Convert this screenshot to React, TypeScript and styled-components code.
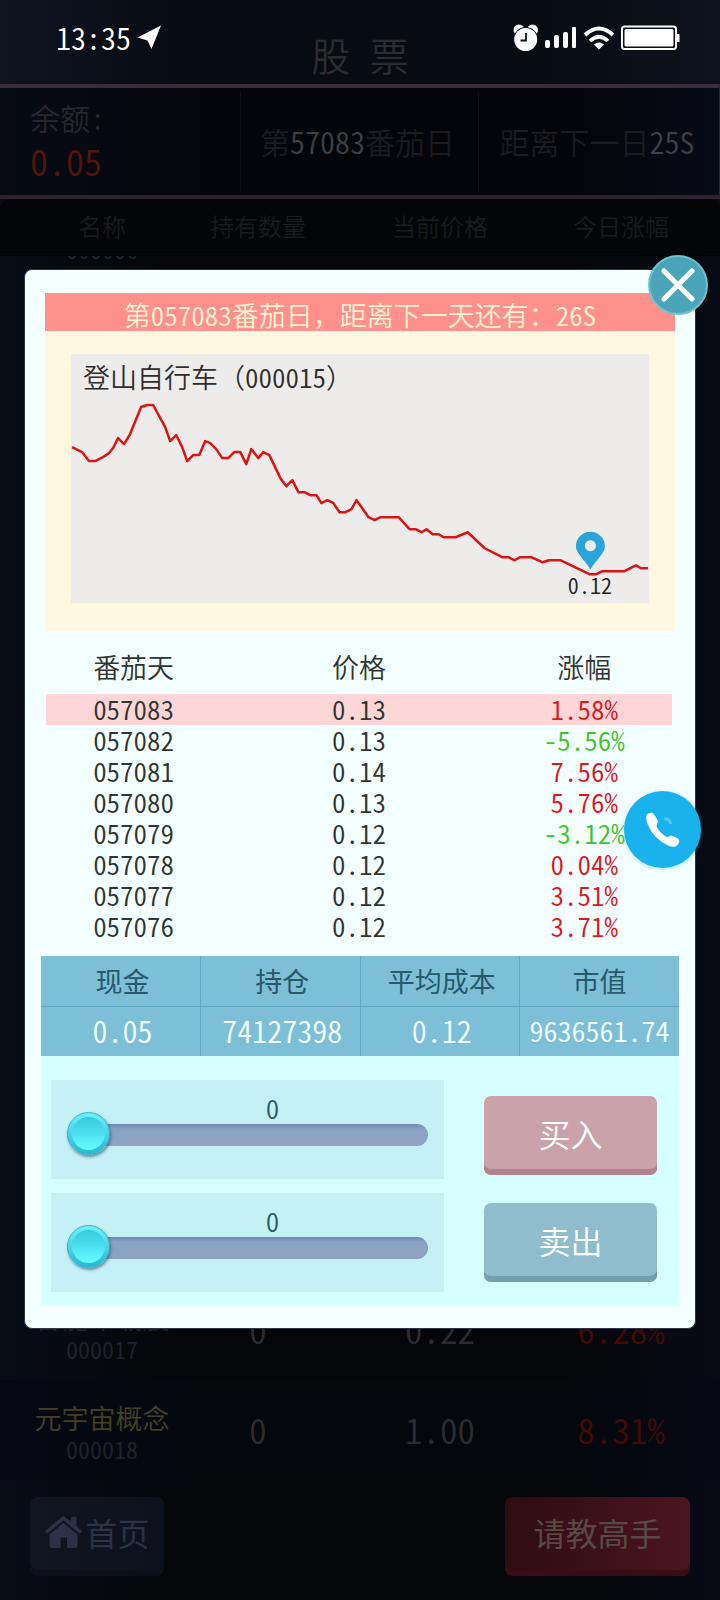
import React, { useState } from 'react';
import styled, { createGlobalStyle } from 'styled-components';

const GlobalStyle = createGlobalStyle`
  *, *::before, *::after { box-sizing: border-box; }
  body {
    margin: 0;
    background: #04060a;
    font-family: "Noto Sans CJK SC", sans-serif;
    font-weight: 350;
    font-feature-settings: "hwid";
  }
  button { font: inherit; font-feature-settings: inherit; border: 0; padding: 0; cursor: pointer; }
  table { border-collapse: collapse; border-spacing: 0; }
  th { font-weight: 350; }
`;

const Page = styled.div`
  position: relative;
  display: flex;
  flex-direction: column;
  min-height: 100vh;
  overflow: hidden;
  background: linear-gradient(90deg, #080c15 0%, #040609 25%, #040609 78%, #080b14 100%);
`;

/* ---------- header ---------- */
const Header = styled.header`
  display: grid;
  grid-template-columns: 1fr auto 1fr;
  align-items: start;
  height: 84px;
  padding: 0 40px 0 56px;
  background: linear-gradient(90deg, #10141f 0%, #070b12 25%, #070b12 75%, #0e121c 100%);
  color: #ffffff;
`;

const Clock = styled.div`
  display: flex;
  align-items: center;
  gap: 6px;
  height: 34px;
  margin-top: 20px;
  font-size: 30px;
  line-height: 34px;
`;

const StatusIcons = styled.div`
  display: flex;
  align-items: center;
  justify-content: flex-end;
  gap: 6px;
  height: 28px;
  margin-top: 24px;
`;

const Title = styled.h1`
  margin: 30px 0 0;
  padding-right: 16px;
  font-size: 39px;
  line-height: 48px;
  font-weight: 350;
  color: #2b2c31;
`;

/* ---------- balance strip ---------- */
const Strip = styled.section`
  display: grid;
  grid-template-columns: 241px 238px 1fr;
  height: 115px;
  padding: 4px 0;
  border-top: 4px solid #3a2d3a;
  border-bottom: 4px solid #2d242d;
  border-right: 1px solid #2d242d;
  background: linear-gradient(90deg, #070b14 0%, #04050a 30%, #04050a 80%, #070b16 100%);
`;

const StripCell = styled.div`
  display: flex;
  flex-direction: column;
  justify-content: center;
  align-items: center;
  padding-right: 4px;
  border-right: 1px solid #101117;
  font-size: 30px;
  line-height: 43px;
  color: #1b1b21;
  &:last-child { border-right: 0; }
`;

const BalanceCell = styled(StripCell)`
  align-items: flex-start;
  padding: 0 0 6px 30px;
  color: #26262c;
`;

const Balance = styled.span`
  font-size: 36px;
  color: #54130f;
`;

const Bright = styled.span`
  color: #3e3e43;
`;

/* ---------- stock list ---------- */
const ListHead = styled.div`
  display: grid;
  grid-template-columns: 204px 108px 256px 1fr;
  justify-items: center;
  height: 57px;
  padding-right: 46px;
  border-bottom: 1px solid #000000;
  border-radius: 10px 10px 0 0;
  background: #040507;
  font-size: 24px;
  line-height: 54px;
  color: #1a1b1f;
  white-space: nowrap;
`;

const List = styled.div`
  flex: 1;
  display: flex;
  flex-direction: column;
  justify-content: space-between;
`;

const ClippedTop = styled.div`
  display: flex;
  flex-direction: column;
  justify-content: flex-end;
  align-items: center;
  width: 204px;
  height: 8px;
  overflow: hidden;
`;

const StockRow = styled.div<{ $alt?: boolean }>`
  display: grid;
  grid-template-columns: 204px 108px 256px 1fr;
  justify-items: center;
  align-items: center;
  height: 100px;
  padding: 0 46px 4px 0;
  background: ${(p) => (p.$alt ? 'linear-gradient(90deg, #060913 0%, #04070c 30%, #04070c 80%, #070a14 100%)' : 'transparent')};
  font-size: 35px;
  color: #2b2c30;
`;

const StockName = styled.div<{ $held?: boolean }>`
  display: flex;
  flex-direction: column;
  align-items: center;
  padding-top: 9px;
  font-size: 27px;
  line-height: 32px;
  color: ${(p) => (p.$held ? '#453f25' : '#222327')};
`;

const StockCode = styled.span`
  font-size: 24px;
  line-height: 30px;
  color: #202329;
`;

const Rise = styled.span`
  color: #430808;
`;

const Footer = styled.footer`
  display: flex;
  justify-content: space-between;
  padding: 17px 30px 24px;
`;

const FooterButton = styled.button<{ $primary?: boolean }>`
  display: flex;
  align-items: center;
  justify-content: center;
  gap: 2px;
  width: ${(p) => (p.$primary ? '185px' : '134px')};
  height: 79px;
  padding-bottom: 9px;
  border-radius: 8px;
  box-shadow: inset 0 -6px 0 ${(p) => (p.$primary ? '#380d15' : '#0c101a')};
  background: ${(p) =>
    p.$primary
      ? 'linear-gradient(90deg, #2f0c12, #4a1520)'
      : 'linear-gradient(90deg, #101520, #0d111d)'};
  color: ${(p) => (p.$primary ? '#594845' : '#2a3243')};
  font-size: 32px;
  font-weight: 400;
`;

/* ---------- dialog ---------- */
const Dialog = styled.section`
  position: absolute;
  top: 269px;
  left: 24px;
  right: 24px;
  padding: 23px 16px 23px;
  border: 1px solid #2b3340;
  border-radius: 8px;
  background: #f4ffff;
`;

const CloseButton = styled.button`
  position: absolute;
  top: -15px;
  right: -13px;
  width: 60px;
  height: 60px;
  border-radius: 50%;
  border: 2px solid #6fc3d0;
  background: #4ba5b9;
  display: grid;
  place-items: center;
`;

const ChartCard = styled.div`
  margin: 0 4px;
  padding-bottom: 28px;
  background: #fff7e0;
`;

/* full-width punctuation beside half-width figures */
const Banner = styled.div`
  height: 38px;
  background: #ff908c;
  color: #fff3d2;
  font-size: 27px;
  line-height: 43px;
  text-align: center;
  white-space: nowrap;
  font-feature-settings: normal;
`;

const Figures = styled.span`
  font-feature-settings: "hwid";
`;

const Chart = styled.figure`
  margin: 23px 26px 0;
  background: #eeecea;
`;

const ChartTitle = styled.figcaption`
  height: 46px;
  padding-left: 12px;
  font-size: 27px;
  line-height: 46px;
  color: #2e2e2e;
  font-feature-settings: normal;
`;

const ChartPlot = styled.svg`
  display: block;
  width: 100%;
  height: auto;
`;

const History = styled.table`
  width: calc(100% - 12px);
  margin: 15px 7px 14px 5px;
  table-layout: fixed;
  text-align: center;
  font-size: 27px;
  line-height: 31px;
  color: #303433;
  th { height: 48px; padding: 0 0 7px; }
  td { padding: 0 0 2px; height: 31px; line-height: 29px; }
`;

const DayRow = styled.tr<{ $current?: boolean }>`
  background: ${(p) => (p.$current ? '#ffd6d7' : 'transparent')};
`;

const Change = styled.td<{ $down?: boolean }>`
  color: ${(p) => (p.$down ? '#40c32c' : '#e0161c')};
`;

const Summary = styled.table`
  width: 100%;
  table-layout: fixed;
  text-align: center;
  background: #7cbfd7;
  th, td {
    padding: 0 0 0 4px;
    height: 50px;
    border-right: 1px solid #60a7c1;
    white-space: nowrap;
  }
  th:last-child, td:last-child { border-right: 0; padding-left: 0; }
  th {
    border-bottom: 1px solid #60a7c1;
    font-size: 27px;
    line-height: 40px;
    color: #27596a;
    font-weight: 400;
  }
  td { padding-bottom: 4px; font-size: 30px; line-height: 40px; color: #f4ffff; }
  td:last-child { font-size: 28px; }
`;

const Trade = styled.div`
  display: grid;
  grid-template-columns: 1fr 173px;
  column-gap: 40px;
  padding: 24px 22px 13px 10px;
  background: #d6ffff;
`;

const SliderStack = styled.div`
  display: flex;
  flex-direction: column;
  gap: 14px;
`;

const ButtonStack = styled.div`
  display: flex;
  flex-direction: column;
  gap: 28px;
  padding-top: 16px;
`;

const SliderBox = styled.label`
  display: flex;
  flex-direction: column;
  height: 99px;
  padding: 14px 16px 0;
  background: #c5f0f5;
`;

const Amount = styled.output`
  height: 19px;
  padding-left: 50px;
  text-align: center;
  font-size: 27px;
  line-height: 28px;
  color: #2f5f69;
`;

const Range = styled.input`
  appearance: none;
  width: 100%;
  height: 44px;
  margin: 0;
  background: transparent;
  &::-webkit-slider-runnable-track {
    height: 22px;
    border-radius: 11px;
    background: linear-gradient(#6d8ab0 0, #8aa2c1 5px, #8da3c1 100%);
  }
  &::-webkit-slider-thumb {
    appearance: none;
    width: 43px;
    height: 43px;
    margin-top: -12px;
    border-radius: 50%;
    border: 1px solid #39b4c4;
    background:
      linear-gradient(#35c8e0, #66fbff) content-box,
      linear-gradient(#6ef3fa, #22b7d2) border-box;
    padding: 4px;
    box-shadow: 1px 2px 3px rgba(40, 70, 100, 0.6);
  }
`;

const TradeButton = styled.button<{ $sell?: boolean }>`
  width: 173px;
  height: 79px;
  padding-bottom: 6px;
  border-radius: 7px;
  background: ${(p) => (p.$sell ? '#8fbdce' : '#cba2a9')};
  box-shadow: inset 0 -6px 0 ${(p) => (p.$sell ? '#779db0' : '#b2838c')};
  color: #ffffff;
  font-size: 32px;
`;

const CallButton = styled.button`
  position: absolute;
  top: 791px;
  right: 19px;
  width: 77px;
  height: 77px;
  border-radius: 50%;
  background: #1ab2ec;
  box-shadow: 0 1px 4px rgba(26, 178, 236, 0.3);
`;

const HISTORY = [
  ['057083', '0.13', '1.58%'],
  ['057082', '0.13', '-5.56%'],
  ['057081', '0.14', '7.56%'],
  ['057080', '0.13', '5.76%'],
  ['057079', '0.12', '-3.12%'],
  ['057078', '0.12', '0.04%'],
  ['057077', '0.12', '3.51%'],
  ['057076', '0.12', '3.71%'],
];

const PRICE_LINE =
  '1,47 11,52 18,61 24,61 32,57 38,53 42,48 47,38 53,44 59,34 70,7 76,5 82,5 94,27 99,41 105,35 111,47 116,61 122,55 128,55 134,41 139,43 145,49 151,58 157,58 163,52 169,52 175,64 180,49 187,58 192,52 198,55 209,78 215,86 221,80 227,92 233,92 239,95 245,95 250,103 256,100 262,103 268,112 274,112 280,109 285,100 297,117 303,120 309,117 327,117 338,129 344,129 350,132 355,129 361,134 367,134 372,137 384,137 396,132 413,148 431,157 437,157 443,160 448,157 460,157 471,162 477,160 489,160 518,174 524,174 530,171 552,171 564,165 569,168 576,168';

function LocationArrow() {
  return (
    <svg width="25" height="25" viewBox="0 0 25 25" aria-hidden="true">
      <path d="M24 0.500 L14.500 24 L10.500 15.500 L0.500 12.500 Z" fill="#fff" />
    </svg>
  );
}

function AlarmIcon() {
  return (
    <svg width="26" height="28" viewBox="0 0 26 28" aria-hidden="true">
      <circle cx="6" cy="6" r="5.500" fill="#fff" />
      <circle cx="19.500" cy="6" r="5.500" fill="#fff" />
      <circle cx="12.700" cy="15.500" r="12.500" fill="#0b0f18" />
      <circle cx="12.700" cy="15.500" r="11.500" fill="#fff" />
      <path d="M13 9 V16.500 H7.500" fill="none" stroke="#0b0f18" strokeWidth="1.800" />
    </svg>
  );
}

function SignalIcon() {
  return (
    <svg width="32" height="24" viewBox="0 0 32 24" aria-hidden="true">
      <rect x="0" y="14" width="5" height="8" rx="2" fill="#fff" />
      <rect x="9" y="9" width="5" height="13" rx="2" fill="#fff" />
      <rect x="18" y="6" width="5" height="16" rx="2" fill="#fff" />
      <rect x="27" y="1" width="4" height="21" rx="1" fill="#fff" />
    </svg>
  );
}

function WifiIcon() {
  return (
    <svg width="32" height="24" viewBox="0 0 32 24" aria-hidden="true">
      <path d="M2 9 Q16 -4 30 9" fill="none" stroke="#fff" strokeWidth="4" />
      <path d="M7 15 Q16 6.500 25 15" fill="none" stroke="#fff" strokeWidth="3.600" />
      <path d="M11 18.500 Q16 14.500 21 18.500 L16 23.500 Z" fill="#fff" />
    </svg>
  );
}

function BatteryIcon() {
  return (
    <svg width="59" height="26" viewBox="0 0 59 26" aria-hidden="true">
      <rect x="1" y="1.500" width="54" height="22.500" rx="2.500" fill="none" stroke="#fff" strokeWidth="2" />
      <rect x="3.500" y="4" width="49" height="17.500" rx="1.500" fill="#fff" />
      <path d="M56 9 h2.500 v8 h-2.500 Z" fill="#fff" />
    </svg>
  );
}

function HomeIcon() {
  return (
    <svg width="39" height="34" viewBox="0 0 39 34" aria-hidden="true">
      <path d="M2 17.500 L19.500 3 L37 17.500" fill="none" stroke="currentColor" strokeWidth="3.500" />
      <path d="M27 2 h5.500 v10 l-5.500 -4.500 Z" fill="currentColor" />
      <path d="M5.500 19.500 L19.500 8 L33.500 19.500 V31 q0 2 -2 2 H23 V22.500 h-6.500 V33 H7.500 q-2 0 -2 -2 Z" fill="currentColor" />
    </svg>
  );
}

function OrderSlider({ name }: { name: string }) {
  const [value, setValue] = useState(0);
  return (
    <SliderBox>
      <Amount>{value}</Amount>
      <Range
        type="range"
        min={0}
        max={100}
        value={value}
        aria-label={name}
        onChange={(e) => setValue(Number(e.target.value))}
      />
    </SliderBox>
  );
}

export default function App() {
  return (
    <Page>
      <GlobalStyle />
      <Header>
        <Clock>
          13:35
          <LocationArrow />
        </Clock>
        <Title>股 票</Title>
        <StatusIcons>
          <AlarmIcon />
          <SignalIcon />
          <WifiIcon />
          <BatteryIcon />
        </StatusIcons>
      </Header>

      <Strip>
        <BalanceCell>
          <span>余额:</span>
          <Balance>0.05</Balance>
        </BalanceCell>
        <StripCell>
          <span>第<Bright>57083</Bright>番茄日</span>
        </StripCell>
        <StripCell>
          <span>距离下一日<Bright>25S</Bright></span>
        </StripCell>
      </Strip>

      <ListHead>
        <span>名称</span>
        <span>持有数量</span>
        <span>当前价格</span>
        <span>今日涨幅</span>
      </ListHead>
      <List>
        <ClippedTop>
          <StockCode>000006</StockCode>
        </ClippedTop>
        <div>
          <StockRow>
            <StockName>
              智能车载股
              <StockCode>000017</StockCode>
            </StockName>
            <span>0</span>
            <span>0.22</span>
            <Rise>6.28%</Rise>
          </StockRow>
          <StockRow $alt>
            <StockName $held>
              元宇宙概念
              <StockCode>000018</StockCode>
            </StockName>
            <span>0</span>
            <span>1.00</span>
            <Rise>8.31%</Rise>
          </StockRow>
        </div>
      </List>
      <Footer>
        <FooterButton type="button">
          <HomeIcon />
          首页
        </FooterButton>
        <FooterButton type="button" $primary>
          请教高手
        </FooterButton>
      </Footer>

      <Dialog role="dialog" aria-label="登山自行车">
        <ChartCard>
          <Banner>
            第<Figures>057083</Figures>番茄日，距离下一天还有：<Figures>26S</Figures>
          </Banner>
          <Chart>
            <ChartTitle>
              登山自行车（<Figures>000015</Figures>）
            </ChartTitle>
            <ChartPlot viewBox="0 0 577 203" aria-hidden="true">
              <polyline points={PRICE_LINE} fill="none" stroke="#dc1414" strokeWidth="2.500" strokeLinejoin="round" />
              <path
                fillRule="evenodd"
                fill="#2ba5d8"
                d="M518.500 169 C513 160 504 153 504 146 A14.500 14.500 0 0 1 533 146 C533 153 524 160 518.500 169 Z M518.500 140 a5.500 5.500 0 1 0 0.010 0 Z"
              />
              <text x="518" y="194" textAnchor="middle" fontSize="22" fill="#222">0.12</text>
            </ChartPlot>
          </Chart>
        </ChartCard>

        <History>
          <colgroup>
            <col style={{ width: '28%' }} />
            <col style={{ width: '44%' }} />
            <col style={{ width: '28%' }} />
          </colgroup>
          <thead>
            <tr>
              <th>番茄天</th>
              <th>价格</th>
              <th>涨幅</th>
            </tr>
          </thead>
          <tbody>
            {HISTORY.map(([day, price, change], i) => (
              <DayRow key={day} $current={i === 0}>
                <td>{day}</td>
                <td>{price}</td>
                <Change $down={change.startsWith('-')}>{change}</Change>
              </DayRow>
            ))}
          </tbody>
        </History>

        <Summary>
          <thead>
            <tr>
              <th>现金</th>
              <th>持仓</th>
              <th>平均成本</th>
              <th>市值</th>
            </tr>
          </thead>
          <tbody>
            <tr>
              <td>0.05</td>
              <td>74127398</td>
              <td>0.12</td>
              <td>9636561.74</td>
            </tr>
          </tbody>
        </Summary>

        <Trade>
          <SliderStack>
            <OrderSlider name="买入数量" />
            <OrderSlider name="卖出数量" />
          </SliderStack>
          <ButtonStack>
            <TradeButton type="button">买入</TradeButton>
            <TradeButton type="button" $sell>卖出</TradeButton>
          </ButtonStack>
        </Trade>

        <CloseButton type="button" aria-label="关闭">
          <svg width="34" height="34" viewBox="0 0 34 34" aria-hidden="true">
            <path d="M3 3 L31 31 M31 3 L3 31" stroke="#fff" strokeWidth="5" strokeLinecap="round" />
          </svg>
        </CloseButton>
      </Dialog>

      <CallButton type="button" aria-label="客服">
        <svg width="77" height="77" viewBox="0 0 77 77" aria-hidden="true">
          <path
            d="M23 23 L27.500 21.500 Q29 21.500 30.500 24 L33.500 29 Q34.500 31 33 33 Q32 34.500 33 36.500 Q36.500 42.500 42 45.500 Q44 46.500 45.500 45 Q47 44 49 45 L54 47.500 Q56 49 55 51.500 L53 54.500 Q50 57 44 54.500 Q30 48 24 34 Q21 27 23 23 Z"
            fill="#fff"
          />
          <path d="M40.500 27.500 Q46 28 46.500 33" fill="none" stroke="#5cc8f1" strokeWidth="3" />
        </svg>
      </CallButton>
    </Page>
  );
}
